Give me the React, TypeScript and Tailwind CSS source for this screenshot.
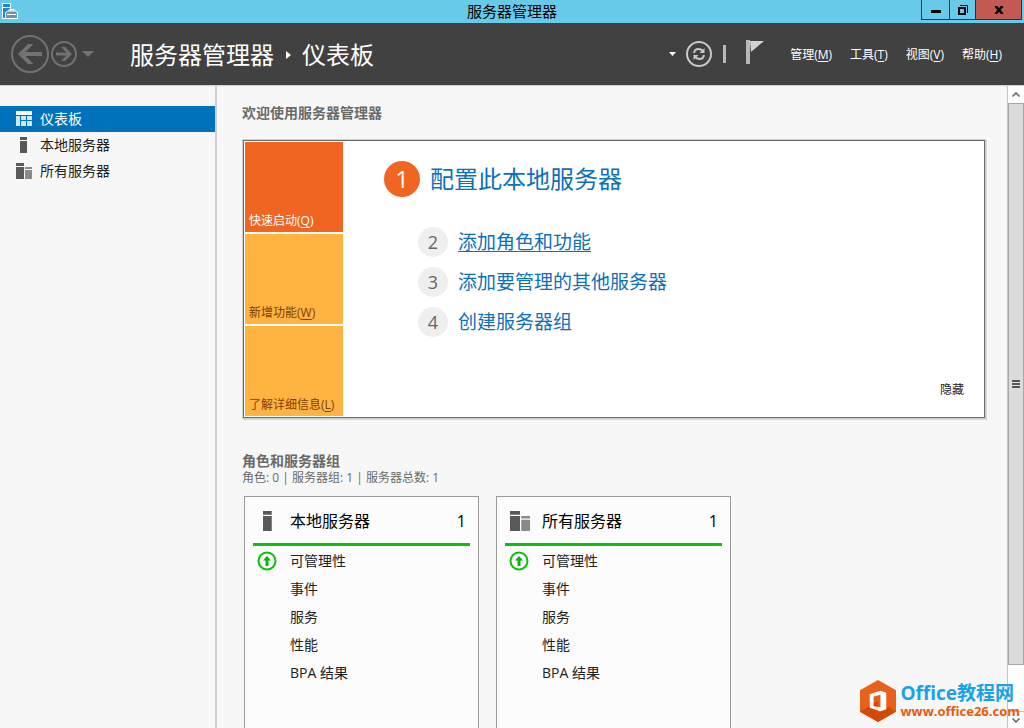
import { ReactNode } from "react"

const navItems = [
  { id: "dashboard", label: "仪表板", icon: <DashboardIcon /> },
  { id: "local", label: "本地服务器", icon: <ServerIcon size={16} /> },
  { id: "all", label: "所有服务器", icon: <ServersIcon size={16} /> },
]

const menus = [
  { label: "管理", accessKey: "M" },
  { label: "工具", accessKey: "T" },
  { label: "视图", accessKey: "V" },
  { label: "帮助", accessKey: "H" },
]

const tiles = [
  { label: "快速启动", accessKey: "Q", style: "bg-[#f16522] text-white" },
  { label: "新增功能", accessKey: "W", style: "bg-[#ffb340] text-[#7f3f00]" },
  { label: "了解详细信息", accessKey: "L", style: "bg-[#ffb340] text-[#7f3f00]" },
]

const steps = [
  { no: 2, label: "添加角色和功能", style: "underline underline-offset-2 decoration-1" },
  { no: 3, label: "添加要管理的其他服务器", style: "" },
  { no: 4, label: "创建服务器组", style: "" },
]

const groups = [
  { title: "本地服务器", count: 1, icon: <ServerIcon size={20} /> },
  { title: "所有服务器", count: 1, icon: <ServersIcon size={20} /> },
]

const checks = ["可管理性", "事件", "服务", "性能", "BPA 结果"]

function DashboardIcon() {
  return (
    <svg width="16" height="16" viewBox="0 0 16 16" aria-hidden="true">
      <path fill="#fff" d="M0 0h16v4H0z" />
      <path fill="#cfe6f5" d="M0 5h4v10H0zM5 5h5v4H5zM11 5h5v4h-5zM5 10h5v5H5zM11 10h5v5h-5z" />
    </svg>
  )
}

function ServerIcon({ size }: { size: number }) {
  return (
    <svg width={size} height={size} viewBox="0 0 16 16" aria-hidden="true">
      <path fill="#595959" d="M4 0h7v3H4zM4 4h7v12H4z" />
    </svg>
  )
}

function ServersIcon({ size }: { size: number }) {
  return (
    <svg width={size} height={size} viewBox="0 0 16 16" aria-hidden="true">
      <path fill="#595959" d="M0 0h8v3H0zM0 4h8v12H0z" />
      <path fill="#8a8a8a" d="M9 4h7v2H9zM9 7h7v9H9z" />
    </svg>
  )
}

function AccessLabel({ label, accessKey }: { label: string, accessKey: string }) {
  return <>{label}(<u className="underline-offset-2">{accessKey}</u>)</>
}

function WindowButton({ label, className, children }: { label: string, className: string, children: ReactNode }) {
  return (
    <button aria-label={label} className={`flex h-5 items-center justify-center border-b border-l border-[#20343c] ${className}`}>
      {children}
    </button>
  )
}

function TitleBar() {
  return (
    <div className="relative flex h-[23px] shrink-0 items-start justify-between bg-[#66cae8]">
      <svg className="ml-0.5 mt-[3px]" width="16" height="16" viewBox="0 0 16 16" aria-hidden="true">
        <path fill="#1c86d1" stroke="#fff" d="M.5.5h8v15h-8z" />
        <path stroke="#fff" d="M1 4.500h7" />
        <path fill="#6f95a5" stroke="#fff" d="M3.500 9.500l2-1.500h8l2 1.500v6h-12z" />
        <path fill="none" stroke="#fff" d="M7 8V6.500h5V8M5 11.500h9" />
      </svg>
      <h1 className="absolute inset-x-0 text-center text-[15px] leading-[23px] text-black">服务器管理器</h1>
      <div className="relative mr-0.5 flex">
        <WindowButton label="最小化" className="w-7">
          <svg className="mt-1" width="10" height="3" aria-hidden="true"><path d="M0 0h10v3H0z" /></svg>
        </WindowButton>
        <WindowButton label="还原" className="w-[26px]">
          <svg width="10" height="10" viewBox="0 0 10 10" fill="none" stroke="#000" aria-hidden="true">
            <path strokeWidth="2" d="M1 3h6v6H1z" />
            <path d="M2 .5h7.500V8" />
          </svg>
        </WindowButton>
        <WindowButton label="关闭" className="w-[47px] border-r bg-[#c35a52]">
          <svg width="10" height="8" viewBox="0 0 10 8" aria-hidden="true">
            <path fill="none" stroke="#000" strokeWidth="2.500" d="M1.500 0l7 8M8.500 0l-7 8" />
          </svg>
        </WindowButton>
      </div>
    </div>
  )
}

function Header() {
  return (
    <header className="flex h-[62px] shrink-0 items-center justify-between bg-[#414141] pl-[11px] pr-[22px] text-white">
      <div className="flex items-center">
        <button aria-label="后退">
          <svg width="38" height="38" viewBox="0 0 38 38" fill="none" stroke="#727272" aria-hidden="true">
            <circle cx="19" cy="19" r="18" strokeWidth="2" />
            <path strokeWidth="4" d="M9 19h22" />
            <path fill="#727272" stroke="none" d="M7 19L17 9h5.500l-10 10 10 10H17z" />
          </svg>
        </button>
        <button aria-label="前进" className="ml-0.5">
          <svg width="26" height="26" viewBox="0 0 26 26" fill="none" stroke="#727272" aria-hidden="true">
            <circle cx="13" cy="13" r="12" strokeWidth="2" />
            <path strokeWidth="3" d="M5 13h14" />
            <path fill="#727272" stroke="none" d="M21 13l-7-7h-4l7 7-7 7h4z" />
          </svg>
        </button>
        <button aria-label="历史记录" className="ml-[5px]">
          <svg width="12" height="6" aria-hidden="true"><path fill="#727272" d="M0 0h12L6 6z" /></svg>
        </button>
        <nav aria-label="位置" className="ml-9 flex items-center pt-0.5 text-2xl leading-8">
          <a href="#home">服务器管理器</a>
          <svg className="mx-[11px]" width="6" height="8" aria-hidden="true"><path fill="#fff" d="M1 0v8l5-4z" /></svg>
          <span>仪表板</span>
        </nav>
      </div>
      <div className="flex items-center">
        <button aria-label="刷新选项">
          <svg width="7" height="4" aria-hidden="true"><path fill="#fff" d="M0 0h7L3.500 4z" /></svg>
        </button>
        <button aria-label="刷新" className="ml-2.5">
          <svg width="26" height="26" viewBox="0 0 26 26" fill="none" stroke="#c8c8c8" aria-hidden="true">
            <circle cx="13" cy="13" r="12" strokeWidth="2" />
            <path strokeWidth="2" d="M8 12c.5-3 2-4 4.500-4 2 0 3 .5 4.500 2M18 14c-.5 3-2 4-4.500 4-2 0-3-.5-4.500-2" />
            <path fill="#c8c8c8" stroke="none" d="M18.500 7v5h-5zM7.500 19v-5h5z" />
          </svg>
        </button>
        <span className="ml-[11px] h-[18px] w-[3px] bg-[#b8b8b8]" />
        <button aria-label="通知" className="ml-5 mb-1">
          <svg width="18" height="24" viewBox="0 0 18 24" aria-hidden="true">
            <path fill="#b8b8b8" d="M0 0h4v24H0z" />
            <path fill="#d2d2d2" d="M4 1h14L5 12z" />
          </svg>
        </button>
        <div className="ml-[26px] flex gap-[18px] pt-0.5 text-xs leading-4">
          {menus.map((menu) => (
            <button key={menu.accessKey}><AccessLabel {...menu} /></button>
          ))}
        </div>
      </div>
    </header>
  )
}

function Sidebar() {
  return (
    <nav className="w-[217px] shrink-0 border-r-2 border-[#cfcfcf] pt-5">
      {navItems.map((item, i) => (
        <a key={item.id} href={`#${item.id}`}
        className={`flex h-[26px] items-center gap-2 pl-4 text-sm ${i === 0 ? "bg-[#0072bc] text-white" : "text-[#222]"}`}>
          {item.icon}
          {item.label}
        </a>
      ))}
    </nav>
  )
}

function Welcome() {
  return (
    <div className="mt-4 border border-[#cfcfcf] shadow-[1px_1px_0_#d4d4d4]">
      <div className="flex border border-[#6b6b6b] bg-white p-px">
        <div className="flex w-[98px] shrink-0 flex-col gap-0.5">
          {tiles.map((tile) => (
            <button key={tile.accessKey} className={`flex h-[90px] items-end px-1 pb-[3px] text-xs leading-4 whitespace-nowrap ${tile.style}`}>
              <span><AccessLabel {...tile} /></span>
            </button>
          ))}
        </div>
        <div className="flex flex-1 flex-col pl-[41px] pr-[19px] pt-[19px] text-[#0d70b8]">
          <a href="#configure" className="flex items-center gap-2.5 text-2xl leading-9">
            <span className="flex size-9 items-center justify-center rounded-full bg-[#f16522] text-white">1</span>
            配置此本地服务器
          </a>
          <ol className="mt-[25px] pl-[34px]">
            {steps.map((step) => (
              <li key={step.no} className="flex h-10 items-center gap-2.5 text-[19px]">
                <span className="flex size-[30px] items-center justify-center rounded-full bg-[#efefef] text-lg text-[#666]">{step.no}</span>
                <a href={`#step-${step.no}`} className={step.style}>{step.label}</a>
              </li>
            ))}
          </ol>
          <button className="mt-auto mb-[18px] self-end text-xs leading-4 text-[#222]">隐藏</button>
        </div>
      </div>
    </div>
  )
}

function GroupCard({ title, count, icon }: { title: string, count: number, icon: ReactNode }) {
  return (
    <section className="h-[270px] w-[235px] border border-[#9b9b9b] bg-[#fcfcfc] px-2">
      <header className="flex h-[49px] items-center gap-2 border-b-3 border-[#0cc00c] pt-0.5 pl-[5px] pr-1 text-base text-black">
        <span className="flex w-6">{icon}</span>
        <h3 className="flex-1">{title}</h3>
        <span>{count}</span>
      </header>
      <ul className="pt-px pl-1 text-sm text-[#222]">
        {checks.map((check, i) => (
          <li key={check} className="flex h-7 items-center">
            <span className="w-[33px]">
              {i === 0 && (
                <svg width="20" height="20" viewBox="0 0 20 20" aria-hidden="true">
                  <circle cx="10" cy="10" r="8.500" fill="none" stroke="#0cc00c" strokeWidth="2" />
                  <path fill="#0cb00c" d="M10 5l4 4.500h-2.500V15h-3V9.500H6z" />
                </svg>
              )}
            </span>
            <a href="#detail">{check}</a>
          </li>
        ))}
      </ul>
    </section>
  )
}

function ScrollBar() {
  return (
    <div className="flex w-[17px] shrink-0 flex-col border-l border-[#c4c4c4] bg-white">
      <button aria-label="向上滚动" className="flex h-[17px] items-center justify-center">
        <svg width="8" height="5" fill="none" stroke="#606060" strokeWidth="1.500" aria-hidden="true"><path d="M.5 4.500L4 1l3.500 3.500" /></svg>
      </button>
      <div className="flex-1">
        <div className="flex h-[92.5%] items-center justify-center border border-[#a6a6a6] bg-[#dadada]">
          <svg width="8" height="8" aria-hidden="true"><path fill="#555" d="M0 0h8v2H0zM0 3h8v2H0zM0 6h8v2H0z" /></svg>
        </div>
      </div>
      <button aria-label="向下滚动" className="flex h-[17px] items-center justify-center border-t border-[#c4c4c4]">
        <svg width="8" height="5" fill="none" stroke="#606060" strokeWidth="1.500" aria-hidden="true"><path d="M.5.5L4 4 7.500.5" /></svg>
      </button>
    </div>
  )
}

function SiteMark() {
  return (
    <a href="#office26" className="absolute right-1 bottom-1.5 flex items-center gap-1 font-bold whitespace-nowrap">
      <svg width="36" height="42" viewBox="0 0 37 43" aria-hidden="true">
        <path fill="#e8611a" d="M18.500 0L37 10.500v22L18.500 43 0 32.500v-22z" />
        <path fill="#d24a0a" d="M0 32.500L18.500 21.500V43zM18.500 43L37 32.500l-8-5-10.500 6z" />
        <path fill="#fff" fillRule="evenodd" d="M10 14.500L21 11l6 2v17l-6 2-11-3.500zM14 17v10l7 1V15z" />
      </svg>
      <span>
        <span className="block text-[19px] leading-5 text-[#1ba1e8]">Office教程网</span>
        <span className="block text-[13px] leading-4 text-[#e95a0c]">www.office26.com</span>
      </span>
    </a>
  )
}

export default function App() {
  return (
    <div className="relative flex h-screen flex-col overflow-hidden bg-[#f7f7f7] font-['Open_Sans','Noto_Sans_CJK_SC',sans-serif]">
      <TitleBar />
      <Header />
      <div className="flex min-h-0 flex-1 border-t border-[#cfcfcf]">
        <Sidebar />
        <main className="min-w-0 flex-1 overflow-hidden pl-[25px] pr-[21px] pt-[17px]">
          <h2 className="text-sm leading-5 font-bold text-[#6a6a6a]">欢迎使用服务器管理器</h2>
          <Welcome />
          <h2 className="mt-[33px] text-sm leading-[18px] font-bold text-[#6a6a6a]">角色和服务器组</h2>
          <p className="text-xs leading-4 text-[#6a6a6a]">角色: 0 | 服务器组: 1 | 服务器总数: 1</p>
          <div className="ml-0.5 mt-2.5 flex gap-[17px]">
            {groups.map((group) => (
              <GroupCard key={group.title} {...group} />
            ))}
          </div>
        </main>
        <ScrollBar />
      </div>
      <SiteMark />
    </div>
  )
}
